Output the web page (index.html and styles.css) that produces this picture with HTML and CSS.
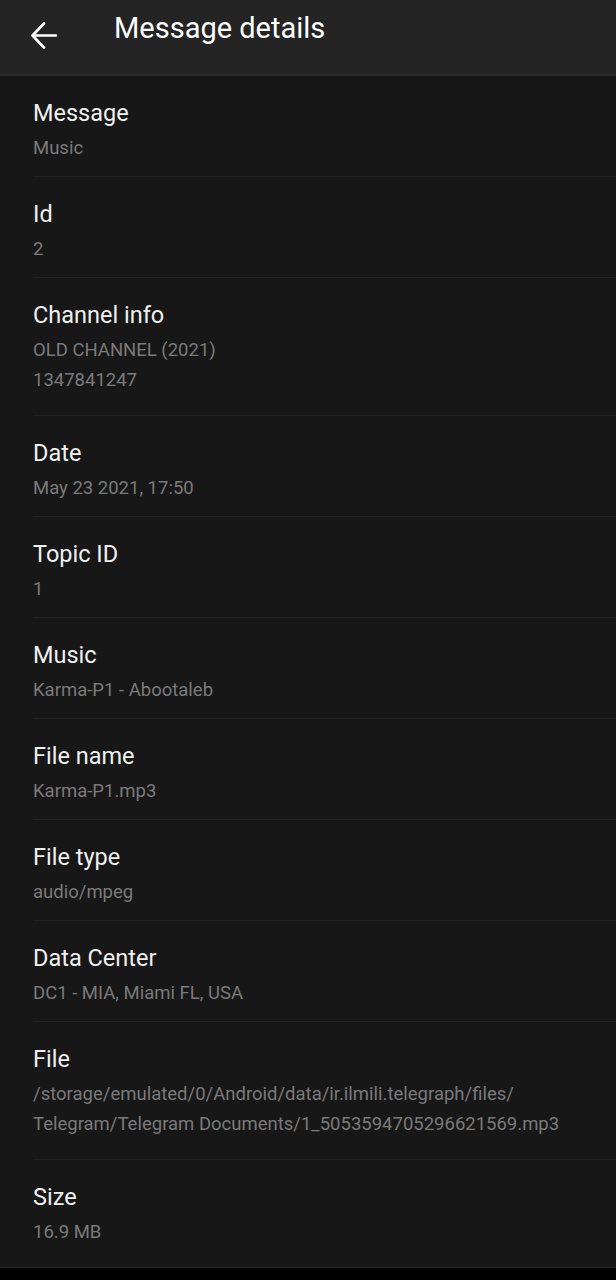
FILE: index.html
```html
<!DOCTYPE html>
<html lang="en">
<head>
    <meta charset="UTF-8">
    <meta name="viewport" content="width=device-width, initial-scale=1.0">
    <title>Message details</title>
    <link rel="stylesheet" href="styles.css">
</head>
<body>
    <div class="screen">
        <div class="toolbar">
            <svg class="back-icon" width="28" height="32" viewBox="0 0 28 32">
                <path d="M26 13.5H3 M14 1.5L2.5 13.5L14 25.5" fill="none" stroke="#ffffff" stroke-width="2.6" stroke-linecap="round" stroke-linejoin="round"/>
            </svg>
            <h1 class="toolbar-title">Message details</h1>
        </div>

        <div class="details">
            <div class="row">
                <div class="row-title">Message</div>
                <div class="row-value">Music</div>
            </div>
            <div class="row">
                <div class="row-title">Id</div>
                <div class="row-value">2</div>
            </div>
            <div class="row multi">
                <div class="row-title">Channel info</div>
                <div class="row-value">OLD CHANNEL (2021)<br>1347841247</div>
            </div>
            <div class="row">
                <div class="row-title">Date</div>
                <div class="row-value">May 23 2021, 17:50</div>
            </div>
            <div class="row">
                <div class="row-title">Topic ID</div>
                <div class="row-value">1</div>
            </div>
            <div class="row">
                <div class="row-title">Music</div>
                <div class="row-value">Karma-P1 - Abootaleb</div>
            </div>
            <div class="row">
                <div class="row-title">File name</div>
                <div class="row-value">Karma-P1.mp3</div>
            </div>
            <div class="row">
                <div class="row-title">File type</div>
                <div class="row-value">audio/mpeg</div>
            </div>
            <div class="row">
                <div class="row-title">Data Center</div>
                <div class="row-value">DC1 - MIA, Miami FL, USA</div>
            </div>
            <div class="row multi">
                <div class="row-title">File</div>
                <div class="row-value">/storage/emulated/0/Android/data/ir.ilmili.telegraph/files/<br>Telegram/Telegram Documents/1_5053594705296621569.mp3</div>
            </div>
            <div class="row last">
                <div class="row-title">Size</div>
                <div class="row-value">16.9 MB</div>
            </div>
        </div>

        <div class="navbar"></div>
    </div>
</body>
</html>
```

FILE: styles.css
```css
body {
    margin: 0;
    padding: 0;
    background-color: #000000;
    font-family: Roboto, "Noto Sans", Arial, sans-serif;
}
.screen {
    display: flex;
    flex-direction: column;
    height: 1280px;
}
.toolbar {
    display: flex;
    align-items: center;
    height: 74px;
    background-color: #242424;
    border-bottom: 2px solid #2b2b2b;
}
.back-icon {
    margin-left: 30px;
    margin-top: 2px;
}
.toolbar-title {
    margin: 0 0 0 56px;
    font-size: 29px;
    font-weight: 400;
    color: #ffffff;
    line-height: 1;
    padding-bottom: 18px;
}
.details {
    flex: 1;
    background-color: #171717;
    border-bottom: 1px solid #262626;
}
.row {
    margin-left: 33px;
    padding: 22px 0 13px 0;
    border-bottom: 1px solid #222222;
}
.row.multi {
    padding-bottom: 20px;
}
.row.last {
    border-bottom: none;
}
.row-title {
    font-size: 23.5px;
    line-height: 30px;
    color: #f0f0f0;
}
.row-value {
    margin-top: 5px;
    font-size: 18.5px;
    line-height: 30px;
    color: #7a7a7a;
}
.navbar {
    height: 12px;
    background-color: #000000;
}
```
